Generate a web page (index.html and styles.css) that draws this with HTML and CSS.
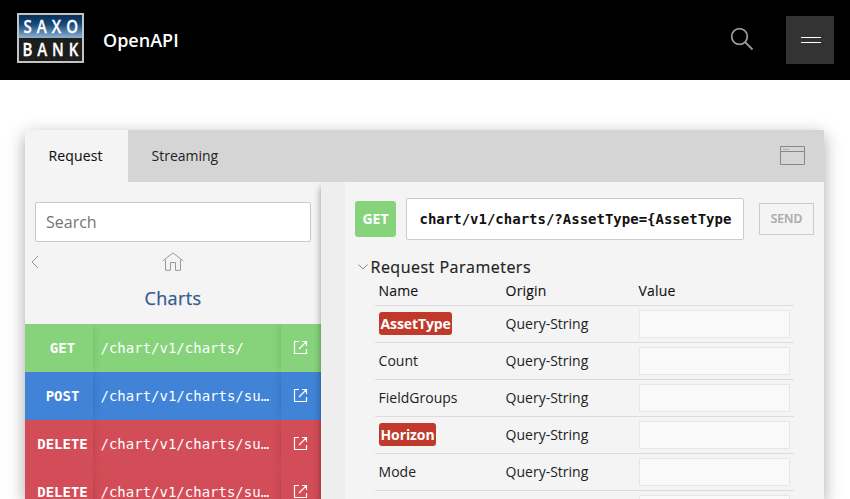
FILE: index.html
```html
<!DOCTYPE html>
<html lang="en">
<head>
<meta charset="utf-8">
<title>OpenAPI</title>
<link rel="stylesheet" href="styles.css">
</head>
<body>
<header class="topbar">
  <svg class="logo" width="67" height="50" viewBox="0 0 67 50" role="img" aria-label="Saxo Bank">
    <defs><linearGradient id="sky" x1="0" y1="0" x2="0" y2="1"><stop offset="0" stop-color="#052d58"/><stop offset=".4" stop-color="#174878"/><stop offset="1" stop-color="#8fb2d3"/></linearGradient></defs>
    <rect width="67" height="50" fill="#c3c5c5"/>
    <rect x="2" y="2" width="63" height="23" fill="url(#sky)"/>
    <rect x="2" y="25" width="63" height="23" fill="#1d1d1b"/>
    <text class="logo-text" transform="translate(6.500 20) scale(.86 1)" textLength="63.500">SAXO</text>
    <text class="logo-text" transform="translate(5.500 42.500) scale(.86 1)" textLength="65">BANK</text>
  </svg>
  <span class="brand">OpenAPI</span>
  <svg class="search-icon" width="24" height="24" viewBox="0 0 24 24"><circle cx="9.500" cy="9.500" r="7.800"/><path d="M15 15l7.500 7.500"/></svg>
  <button class="menu" aria-label="Menu"><span class="bar"></span><span class="bar"></span></button>
</header>
<main class="card">
  <nav class="tabs">
    <span class="tab active">Request</span>
    <span class="tab">Streaming</span>
    <svg class="window-icon" width="25" height="19" viewBox="0 0 25 19"><path d="M.5.5h24v18H.5zM.5 5.500h24"/><path class="dots" d="M3 3.300h6"/></svg>
  </nav>
  <div class="columns">
    <aside class="side">
      <input class="search" placeholder="Search">
      <div class="crumbs">
        <svg class="back" width="8" height="14" viewBox="0 0 8 14"><path d="M7 1L1 7l6 6"/></svg>
        <svg class="home" width="22" height="19" viewBox="0 0 22 19"><path d="M.7 9L11 .9 21.300 9M3.500 7.500v10.800H8.500v-7.800h5v7.800h5V7.500"/></svg>
      </div>
      <h2 class="group">Charts</h2>
      <div class="endpoint get"><b class="verb">GET</b><span class="path">/chart/v1/charts/</span><span class="open"><svg width="15" height="15" viewBox="0 0 15 15"><path d="M6 1.500H1.500v12h12V9M6 9l7.500-7.500M9 1.500h4.500V6"/></svg></span></div>
      <div class="endpoint post"><b class="verb">POST</b><span class="path">/chart/v1/charts/su…</span><span class="open"><svg width="15" height="15" viewBox="0 0 15 15"><path d="M6 1.500H1.500v12h12V9M6 9l7.500-7.500M9 1.500h4.500V6"/></svg></span></div>
      <div class="endpoint delete"><b class="verb">DELETE</b><span class="path">/chart/v1/charts/su…</span><span class="open"><svg width="15" height="15" viewBox="0 0 15 15"><path d="M6 1.500H1.500v12h12V9M6 9l7.500-7.500M9 1.500h4.500V6"/></svg></span></div>
      <div class="endpoint delete"><b class="verb">DELETE</b><span class="path">/chart/v1/charts/su…</span><span class="open"><svg width="15" height="15" viewBox="0 0 15 15"><path d="M6 1.500H1.500v12h12V9M6 9l7.500-7.500M9 1.500h4.500V6"/></svg></span></div>
    </aside>
    <div class="gutter"></div>
    <section class="request">
      <div class="request-line">
        <span class="method">GET</span>
        <div class="url">chart/v1/charts/?AssetType={AssetType</div>
        <button class="send">SEND</button>
      </div>
      <h3 class="params-title"><svg width="10" height="6" viewBox="0 0 10 6"><path d="M.5.5L5 5 9.500.5"/></svg><span>Request Parameters</span></h3>
      <div class="params">
        <div class="row head"><span>Name</span><span>Origin</span><span>Value</span></div>
        <div class="row"><span><b class="required">AssetType</b></span><span>Query-String</span><input class="value"></div>
        <div class="row"><span>Count</span><span>Query-String</span><input class="value"></div>
        <div class="row"><span>FieldGroups</span><span>Query-String</span><input class="value"></div>
        <div class="row"><span><b class="required">Horizon</b></span><span>Query-String</span><input class="value"></div>
        <div class="row"><span>Mode</span><span>Query-String</span><input class="value"></div>
        <div class="row"><span></span><span></span><input class="value"></div>
      </div>
    </section>
  </div>
</main>
</body>
</html>
```
FILE: styles.css
```css
* { box-sizing: border-box; }
html, body { height: 100%; }
body { display: flex; flex-direction: column; margin: 0; overflow: hidden; background: #fff; color: #222; font: 14px/20px "Open Sans", sans-serif; }
input, button { font-family: inherit; outline: 0; }
svg { display: block; flex: none; fill: none; }
.topbar { display: flex; flex: none; align-items: center; height: 80px; padding: 0 16px 0 17px; background: #000; }
.logo { margin-top: -4px; }
.logo-text { fill: #fff; stroke: #fff; stroke-width: .3px; font: 600 17.5px "Open Sans", sans-serif; }
.brand { margin-left: 19px; color: #fff; font-size: 18px; font-weight: 600; }
.search-icon { margin: -2px 32px 0 auto; stroke: #999; stroke-width: 1.8; }
.menu { display: flex; flex-direction: column; align-items: center; justify-content: center; gap: 4px; width: 48px; height: 48px; padding: 0 0 0 2px; border: 0; background: #333; }
.bar { width: 20px; height: 1px; background: #fff; }
.card { display: flex; flex: 1; flex-direction: column; min-height: 0; width: 799px; margin: 50px 0 0 25px; background: #f4f4f4; box-shadow: 0 5px 16px rgba(0,0,0,.35); }
.tabs { display: flex; flex: none; align-items: center; height: 52px; padding-right: 19px; background: #d5d5d5; }
.tab { padding: 16px 23.5px; color: #222; }
.tab.active { width: 103px; background: #f4f4f4; color: #111; letter-spacing: .15px; -webkit-text-stroke: .12px; }
.window-icon { margin: -1px 0 0 auto; stroke: #888; }
.window-icon .dots { stroke: #aaa; }
.columns { display: flex; flex: 1; min-height: 0; background: #f4f4f4; overflow: hidden; }
.side { width: 296px; padding-top: 20px; background: #f4f4f4; overflow: hidden; }
.search { display: block; width: 276px; height: 40px; margin: 0 10px; padding: 0 10px; border: 1px solid #c8c8c8; border-radius: 2px; background: #fff; font-size: 16px; }
.search::placeholder { color: #757575; }
.crumbs { display: grid; grid-template-columns: 1fr auto 1fr; align-items: center; height: 40px; padding: 0 6px; }
.back, .home { stroke: #999; }
.home { margin-top: -1px; }
.group { margin: 6px 0 15px; color: #335b8e; font-size: 18px; line-height: 21px; font-weight: 400; letter-spacing: .4px; text-align: center; -webkit-text-stroke: .25px; }
.endpoint { display: flex; height: 48px; color: #fff; font: 14px/48px "DejaVu Sans Mono", monospace; overflow: hidden; }
.get { background: #87d37c; }
.post { background: #4183d7; }
.delete { background: #d24d57; }
.verb { width: 68px; padding-left: 7px; text-align: center; box-shadow: 0 0 10px -2px rgba(0,0,0,.22); }
.path { width: 188px; padding-left: 7.5px; white-space: nowrap; }
.open { display: grid; place-items: center; width: 40px; padding-right: 1px; box-shadow: 0 0 10px -2px rgba(0,0,0,.25); }
.open svg { margin-top: -1px; stroke: #fff; stroke-width: 1.200; }
.gutter { position: relative; width: 24px; background: #eee; box-shadow: 0 5px 7px rgba(0,0,0,.4); }
.request { position: relative; width: 479px; padding: 16px 10px; background: #f4f4f4; }
.request-line { display: flex; align-items: center; height: 42px; }
.method { width: 41px; height: 36px; border-radius: 3px; background: #87d37c; color: #fff; font-weight: 700; line-height: 36px; text-align: center; }
.url { width: 338px; height: 42px; margin: 0 15px 0 10px; padding-left: 12.5px; border: 1px solid #ccc; border-radius: 2px; background: #fff; color: #111; font: bold 14px/40px "DejaVu Sans Mono", monospace; white-space: nowrap; }
.send { width: 55px; height: 32px; padding: 0 0 2px; border: 1px solid #ccc; background: #f4f4f4; color: #aaa; font-size: 12px; font-weight: 600; -webkit-text-stroke: .2px; }
.params-title { display: flex; align-items: center; gap: 3px; margin: 16px 0 0 2.5px; color: #222; font-size: 16px; line-height: 22px; font-weight: 400; letter-spacing: .5px; -webkit-text-stroke: .2px; }
.params-title svg { stroke: #888; }
.params { width: 419px; margin-left: 20px; }
.row { display: grid; grid-template-columns: 127px 133px 151px; align-items: center; height: 37px; padding-left: 4px; border-bottom: 1px solid #dcdcdc; }
.row > span { margin-left: -.4px; }
.row.head { height: 28px; padding-bottom: 1px; color: #111; letter-spacing: .15px; -webkit-text-stroke: .12px; }
.required { display: block; width: fit-content; height: 23px; margin: -1px 0 0 .4px; padding: 0 1px 0 1.5px; border-radius: 3px; background: #c0392b; color: #fff; line-height: 23px; letter-spacing: -.1px; }
.value { width: 151px; height: 28px; border: 1px solid #e6e6e6; background: #f9f9f9; }
```
